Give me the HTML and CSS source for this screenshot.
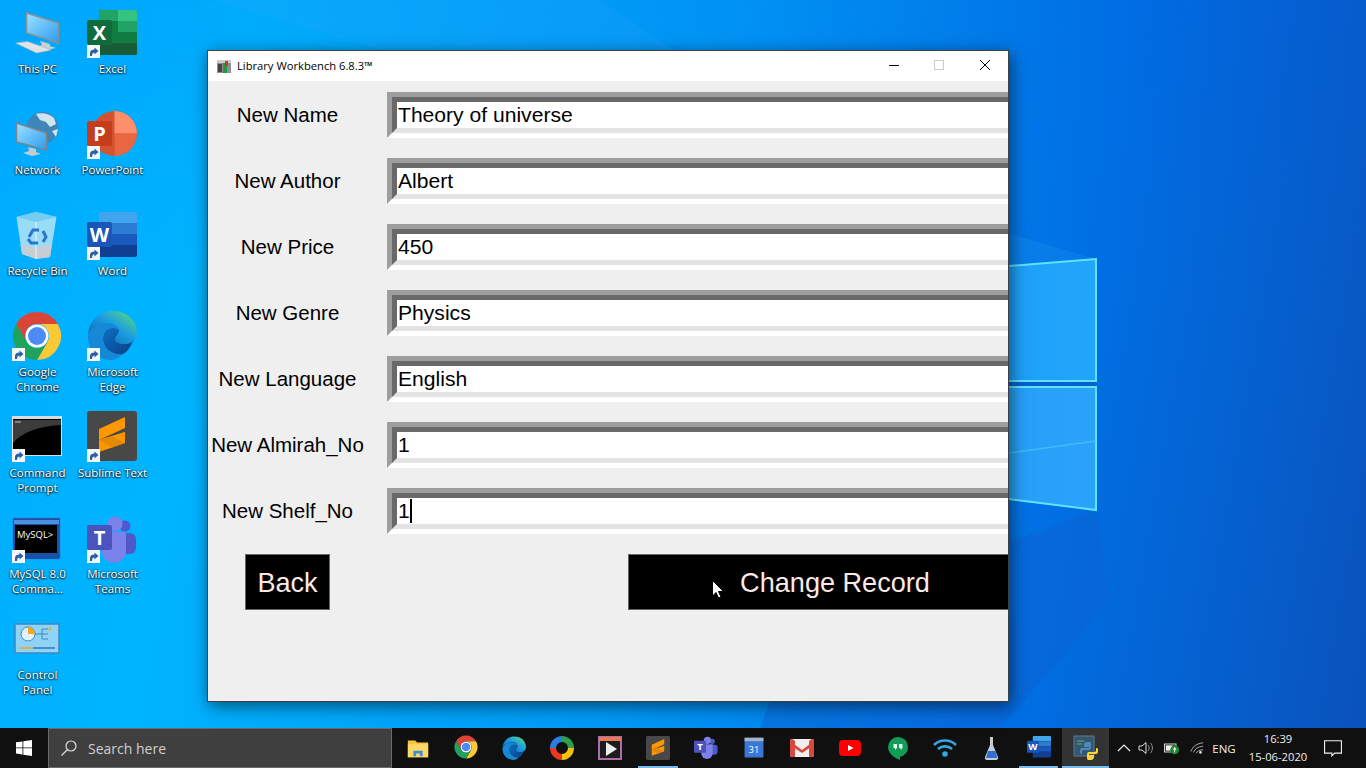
FILE: index.html
```html
<!DOCTYPE html>
<html lang="en">
<head>
<meta charset="utf-8">
<title>Library Workbench</title>
<link rel="stylesheet" href="styles.css">
</head>
<body>
<svg class="defs" aria-hidden="true">
  <defs>
    <linearGradient id="screen" x1="0" y1="0" x2="1" y2="1"><stop offset="0" stop-color="#9be2ff"/><stop offset="1" stop-color="#2f9cf0"/></linearGradient>
    <linearGradient id="edgeA" x1="0" y1="1" x2="1" y2="0"><stop offset="0" stop-color="#0c59a4"/><stop offset=".55" stop-color="#1b9de2"/><stop offset="1" stop-color="#62e06c"/></linearGradient>
    <linearGradient id="edgeB" x1="0" y1="0" x2="1" y2="1"><stop offset="0" stop-color="#0d6fc4"/><stop offset="1" stop-color="#0a3f86"/></linearGradient>
    <linearGradient id="pane" x1="0" y1="0" x2="1" y2="0"><stop offset="0" stop-color="#0f8cf0"/><stop offset="1" stop-color="#22a6fb"/></linearGradient>
    <linearGradient id="pane2" x1="0" y1="0" x2="1" y2="0"><stop offset="0" stop-color="#1590f0"/><stop offset="1" stop-color="#2aa4fa"/></linearGradient>
    <symbol id="badge" viewBox="0 0 13 13"><rect width="13" height="13" fill="#f4f6f8"/><path d="M3 11V8C3 5.500 5 4.500 7.500 4.500V2.500L11.500 6L7.500 9.500V7.500C6 7.500 5 8.500 5 11Z" fill="#2a5ea8"/></symbol>
    <symbol id="excel" viewBox="0 0 50 50"><rect x="12" width="38" height="45" rx="2" fill="#107c41"/><path d="M12 2a2 2 0 0 1 2-2H31V11H12Z" fill="#21a366"/><path d="M31 0H48a2 2 0 0 1 2 2V11H31Z" fill="#33c481"/><rect x="31" y="11" width="19" height="11" fill="#21a366"/><path d="M12 33H50V43a2 2 0 0 1-2 2H14a2 2 0 0 1-2-2Z" fill="#185c37"/><rect y="10" width="25" height="25" rx="2" fill="#0f6c3a"/><text x="12.500" y="29.500" class="tile-letter">X</text></symbol>
    <symbol id="word" viewBox="0 0 50 50"><path d="M12 2a2 2 0 0 1 2-2H48a2 2 0 0 1 2 2V11H12Z" fill="#41a5ee"/><rect x="12" y="11" width="38" height="11" fill="#2b7cd3"/><rect x="12" y="22" width="38" height="11" fill="#185abd"/><path d="M12 33H50V43a2 2 0 0 1-2 2H14a2 2 0 0 1-2-2Z" fill="#103f91"/><rect y="10" width="25" height="25" rx="2" fill="#1a56b8"/><text x="12.500" y="29.500" class="tile-letter">W</text></symbol>
    <symbol id="ppt" viewBox="0 0 50 50"><circle cx="27.500" cy="22.500" r="22.500" fill="#d35230"/><path d="M27.500 0A22.500 22.500 0 0 1 50 22.500H27.500Z" fill="#ff8f6b"/><path d="M27.500 22.500H50A22.500 22.500 0 0 1 27.500 45Z" fill="#ed6c47" opacity=".8"/><rect y="10" width="25" height="25" rx="2" fill="#c43e1c"/><text x="12.500" y="29.500" class="tile-letter">P</text></symbol>
    <symbol id="chrome" viewBox="-1 1 50 50"><path d="M3.200 12L13.600 30A12 12 0 0 1 24 12H44.800A24 24 0 0 0 3.200 12Z" fill="#db4437"/><path d="M44.800 12A24 24 0 0 1 24 48L34.400 30A12 12 0 0 0 24 12Z" fill="#fcc934"/><path d="M24 48A24 24 0 0 1 3.200 12L13.600 30A12 12 0 0 0 34.400 30Z" fill="#1fa35c"/><circle cx="24" cy="24" r="11.500" fill="#fff"/><circle cx="24" cy="24" r="9" fill="#4c8bf5"/></symbol>
    <symbol id="edge" viewBox="0 0 50 50"><path d="M1 27C1 12 11 1 26 1C40 1 50 11 50 23C50 31 44 34 38 34C32 34 28 32 28 29C28 26 32 26 32 21C32 15 27 12 21 13C10 14 1 20 1 27Z" fill="url(#edgeA)"/><path d="M1 27C1 20 10 13 21 13C27 13 31 16 32 20C24 15 16 20 16 29C16 38 26 46 36 44C32 48 28 50 24 50C11 50 1 40 1 27Z" fill="#1688d6"/><path d="M16 29C16 20 24 15 32 20C32 25 28 26 28 29C28 32 32 34 38 34C41 34 44 33 46 31C43 38 40 42 36 44C26 46 16 38 16 29Z" fill="url(#edgeB)"/></symbol>
    <symbol id="sublime" viewBox="0 0 50 50"><rect width="50" height="50" rx="3" fill="#484848"/><path d="M12 29L38 21V24L12 31Z" fill="#c97600"/><path d="M12 18L38 6V17L12 29Z" fill="#ff9800"/><path d="M12 29L38 21V32L12 41Z" fill="#fb9600"/><path d="M12 29L25 25L38 32L25 36.500Z" fill="#e58a00"/></symbol>
    <symbol id="teams" viewBox="0 0 50 50"><circle cx="38" cy="11" r="5.500" fill="#5059c9"/><rect x="32" y="18" width="17" height="21" rx="6" fill="#5059c9"/><circle cx="28" cy="9" r="7.500" fill="#7b83eb"/><path d="M15 17H39V36A12 12 0 0 1 15 36Z" fill="#7b83eb"/><rect y="10" width="25" height="25" rx="2" fill="#4b53bc"/><text x="12.500" y="29.500" class="tile-letter">T</text></symbol>
    <symbol id="gmail" viewBox="0 0 24 20"><rect y="1" width="24" height="18" rx="2" fill="#f1efee"/><path d="M0 3L12 12L24 3V7L12 15L0 7Z" fill="#e0443a"/><path d="M0 3C0 1 2 .5 3 1.500L5 3V19H2a2 2 0 0 1-2-2ZM24 3C24 1 22 .5 21 1.500L19 3V19H22a2 2 0 0 0 2-2Z" fill="#d8483e"/></symbol>
  </defs>
</svg>

<div class="desktop">
  <svg class="wallpaper" viewBox="0 0 1366 728" aria-hidden="true">
    <path d="M210 0L1096 259L1000 272L600 0Z" fill="#2aa8ff" opacity=".18"/>
    <path d="M1096 510L800 620L760 728H1000L1110 600Z" fill="#0b62d4" opacity=".5"/>
    <rect x="700" y="381" width="396" height="6" fill="#0a5fd0"/>
    <path d="M700 291L1096 259V381H700Z" fill="url(#pane)" stroke="#5fe4ff" stroke-width="2"/>
    <path d="M700 387H1096V510L700 460Z" fill="url(#pane2)" stroke="#5fe4ff" stroke-width="2"/>
    <path d="M700 495L1096 441" stroke="#4cc6ff" stroke-width="1.500" opacity=".7"/>
  </svg>

  <div class="icon-grid">
    <div class="desk-icon">
      <svg class="desk-art" viewBox="0 0 50 50"><path d="M14.500 3L46.500 13V33L14.500 23Z" fill="url(#screen)" stroke="#8b8f95" stroke-width="1.500"/><path d="M28 31L38 34V36L44 38L34 40L24 37L30 35Z" fill="#c9ced3"/><path d="M3.500 33L15.500 31.500L39.500 40L24.500 43Z" fill="#dfe3e6" stroke="#aab0b5" stroke-width=".5"/></svg>
      <span class="desk-label">This PC</span>
    </div>
    <div class="desk-icon">
      <span class="desk-art"><svg class="fill"><use href="#excel"/></svg><svg class="badge"><use href="#badge"/></svg></span>
      <span class="desk-label">Excel</span>
    </div>
    <div class="desk-icon">
      <svg class="desk-art" viewBox="0 0 50 50"><circle cx="30.500" cy="17" r="16" fill="#3f86b8"/><path d="M24 3C30 1 38 3 42 7L44 13L38 16L34 11L28 9ZM40 20L46 18L44 26Z" fill="#cfe4ee"/><path d="M4.500 12L34.500 22V39L4.500 31Z" fill="url(#screen)" stroke="#7c848c" stroke-width="1.500"/><path d="M16 36L24 38V41L29 43L20 45L11 42L17 40Z" fill="#c4c9ce"/></svg>
      <span class="desk-label">Network</span>
    </div>
    <div class="desk-icon">
      <span class="desk-art"><svg class="fill"><use href="#ppt"/></svg><svg class="badge"><use href="#badge"/></svg></span>
      <span class="desk-label">PowerPoint</span>
    </div>
    <div class="desk-icon">
      <svg class="desk-art" viewBox="0 0 50 50"><path d="M4.500 5L24 0L44.500 5L38 45L24 47L10 42Z" fill="#a9e2f7" opacity=".9"/><path d="M4.500 5L24 10L44.500 5L24 0Z" fill="#74cdf0"/><path d="M8.500 32L24 36L40 32L38 45L24 47L10 42Z" fill="#c7cdd2"/><path d="M24 10V47" stroke="#e6f7ff" stroke-width="1"/><g fill="none" stroke="#2f74c9" stroke-width="3"><path d="M17 25L21 18H27"/><path d="M31 19L34 25L31 30"/><path d="M26 31H19L16 27"/></g></svg>
      <span class="desk-label">Recycle Bin</span>
    </div>
    <div class="desk-icon">
      <span class="desk-art"><svg class="fill"><use href="#word"/></svg><svg class="badge"><use href="#badge"/></svg></span>
      <span class="desk-label">Word</span>
    </div>
    <div class="desk-icon">
      <span class="desk-art"><svg class="fill"><use href="#chrome"/></svg><svg class="badge"><use href="#badge"/></svg></span>
      <span class="desk-label">Google<br>Chrome</span>
    </div>
    <div class="desk-icon">
      <span class="desk-art lifted"><svg class="fill"><use href="#edge"/></svg><svg class="badge"><use href="#badge"/></svg></span>
      <span class="desk-label">Microsoft<br>Edge</span>
    </div>
    <div class="desk-icon">
      <span class="desk-art"><svg class="fill" viewBox="0 0 50 50"><rect y="2" width="50" height="40" fill="#d6dce0"/><rect x="1" y="5" width="48" height="36" fill="#000"/><path d="M1 29C10 18 28 12 49 11V6H1Z" fill="#3c3c3c"/><path d="M3 8H9" stroke="#bbb"/></svg><svg class="badge"><use href="#badge"/></svg></span>
      <span class="desk-label">Command<br>Prompt</span>
    </div>
    <div class="desk-icon">
      <span class="desk-art lifted"><svg class="fill"><use href="#sublime"/></svg><svg class="badge"><use href="#badge"/></svg></span>
      <span class="desk-label">Sublime Text</span>
    </div>
    <div class="desk-icon">
      <span class="desk-art"><svg class="fill" viewBox="0 0 50 50"><rect x="1" y="3" width="47" height="41" rx="1" fill="#1c4fa8" stroke="#3a6fc4" stroke-width=".5"/><rect x="2" y="5" width="45" height="4" fill="#4c8ee0"/><rect x="3" y="10" width="42" height="28" fill="#000"/><text x="5" y="23" class="mysql">MySQL&gt;</text></svg><svg class="badge"><use href="#badge"/></svg></span>
      <span class="desk-label">MySQL 8.0<br>Comma...</span>
    </div>
    <div class="desk-icon">
      <span class="desk-art"><svg class="fill"><use href="#teams"/></svg><svg class="badge"><use href="#badge"/></svg></span>
      <span class="desk-label">Microsoft<br>Teams</span>
    </div>
    <div class="desk-icon">
      <svg class="desk-art" viewBox="0 0 50 50"><rect x="3" y="8" width="44" height="29" fill="#8fd3f6" stroke="#3f87c0" stroke-width="1.500"/><circle cx="16" cy="18" r="7" fill="#dff3ff" stroke="#3f87c0"/><path d="M16 18V11A7 7 0 0 1 23 18Z" fill="#f4a623"/><path d="M23 18H30V13H36M30 18H36M30 18V23H36" stroke="#3f87c0" fill="none"/><path d="M7 32H21" stroke="#f4a623" stroke-width="1.500"/><path d="M21 32H43" stroke="#2f78c8" stroke-width="1.500"/><circle cx="38" cy="13" r="1.500" fill="#f4a623"/></svg>
      <span class="desk-label">Control<br>Panel</span>
    </div>
  </div>

  <section class="window">
    <header class="titlebar">
      <svg class="app-icon" viewBox="0 0 16 16"><rect x="1" y="3" width="14" height="12" fill="#8a9096"/><rect x="1" y="2" width="14" height="3" fill="#c8ccd0"/><rect x="7" y="5" width="4" height="10" fill="#1f9a3c"/><rect x="9" y="3" width="3" height="5" fill="#d0342c"/><rect x="2" y="6" width="4" height="8" fill="#444"/></svg>
      <span class="title-text">Library Workbench 6.8.3™</span>
      <div class="win-controls">
        <svg class="win-btn" viewBox="0 0 46 30"><path d="M19 14.500H29" stroke="#000"/></svg>
        <svg class="win-btn" viewBox="0 0 46 30"><rect x="18.500" y="9.500" width="9" height="9" fill="none" stroke="#ccc"/></svg>
        <svg class="win-btn" viewBox="0 0 46 30"><path d="M18 9L28 19M28 9L18 19" stroke="#000"/></svg>
      </div>
    </header>
    <div class="form">
      <div class="row"><label class="field-label">New Name</label><div class="entry"><div class="entry-inner">Theory of universe</div></div></div>
      <div class="row"><label class="field-label">New Author</label><div class="entry"><div class="entry-inner">Albert</div></div></div>
      <div class="row"><label class="field-label">New Price</label><div class="entry"><div class="entry-inner">450</div></div></div>
      <div class="row"><label class="field-label">New Genre</label><div class="entry"><div class="entry-inner">Physics</div></div></div>
      <div class="row"><label class="field-label">New Language</label><div class="entry"><div class="entry-inner">English</div></div></div>
      <div class="row"><label class="field-label">New Almirah_No</label><div class="entry"><div class="entry-inner">1</div></div></div>
      <div class="row"><label class="field-label">New Shelf_No</label><div class="entry"><div class="entry-inner">1<span class="caret"></span></div></div></div>
      <div class="actions">
        <button class="btn btn-back">Back</button>
        <button class="btn btn-change">Change Record</button>
      </div>
    </div>
    <svg class="pointer" viewBox="0 0 12 19"><path d="M.5.500V16L4 12.500L6.500 18L9 17L6.500 11.500H11.500Z" fill="#fff" stroke="#000"/></svg>
  </section>
</div>

<footer class="taskbar">
  <div class="start"><svg class="start-logo" viewBox="0 0 16 16"><path d="M0 2.300L6.500 1.400V7.500H0ZM7.300 1.300L16 0V7.500H7.300ZM0 8.300H6.500V14.500L0 13.600ZM7.300 8.300H16V16L7.300 14.700Z" fill="#fff"/></svg></div>
  <div class="search">
    <svg class="search-glass" viewBox="0 0 16 16"><circle cx="10" cy="6" r="5" fill="none" stroke="#ddd" stroke-width="1.200"/><path d="M6.500 9.500L.5 15.500" stroke="#ddd" stroke-width="1.200"/></svg>
    <span class="search-text">Search here</span>
  </div>
  <div class="apps">
    <div class="app"><svg class="app-art" viewBox="-1 -1 26 26"><path d="M1 4H9L11 6H23V22H1Z" fill="#f4c542"/><rect x="1" y="8" width="22" height="14" fill="#ffd968"/><path d="M7 21V15H17V21H14V18H10V21Z" fill="#3a8ed8"/></svg></div>
    <div class="app"><svg class="app-art"><use href="#chrome"/></svg></div>
    <div class="app"><svg class="app-art"><use href="#edge"/></svg></div>
    <div class="app"><svg class="app-art" viewBox="0 0 24 24"><g fill="none" stroke-width="6"><path d="M12 3A9 9 0 0 1 21 12" stroke="#2e9e4f"/><path d="M21 12A9 9 0 0 1 12 21" stroke="#f4c20d"/><path d="M12 21A9 9 0 0 1 3 12" stroke="#e8391f"/><path d="M3 12A9 9 0 0 1 12 3" stroke="#2a7de1"/></g><circle cx="12" cy="12" r="4" fill="#111"/></svg></div>
    <div class="app"><svg class="app-art" viewBox="0 0 24 24"><rect x="1" y="1" width="22" height="22" fill="#1c1c1c" stroke="#b06ca8" stroke-width="2"/><path d="M1 1H23V5H1Z" fill="#e87a52"/><path d="M8 6L19 13L8 20Z" fill="#eee"/></svg></div>
    <div class="app underlined"><svg class="app-art"><use href="#sublime"/></svg></div>
    <div class="app"><svg class="app-art"><use href="#teams"/></svg></div>
    <div class="app"><svg class="app-art" viewBox="-2 0 28 26"><rect x="1" y="1" width="22" height="23" rx="1" fill="#3a78d8"/><rect x="1" y="1" width="22" height="4" fill="#a8b4c4"/><text x="12" y="19" class="cal">31</text></svg></div>
    <div class="app"><svg class="app-art" viewBox="0 0 24 20"><use href="#gmail"/></svg></div>
    <div class="app"><svg class="app-art" viewBox="0 0 24 24"><rect x="1" y="4" width="22" height="16" rx="4" fill="#f00"/><path d="M10 9L15.500 12L10 15Z" fill="#fff"/></svg></div>
    <div class="app"><svg class="app-art" viewBox="0 0 24 24"><path d="M12 1A10 10 0 0 1 14 20.800V24C8 22 2 17 2 11A10 10 0 0 1 12 1Z" fill="#0f9d58"/><path d="M7.500 8H11V12L9 14V12H7.500ZM13 8H16.500V12L14.500 14V12H13Z" fill="#e6f4ea"/></svg></div>
    <div class="app"><svg class="app-art" viewBox="0 0 24 24"><g fill="none" stroke="#35a7e0" stroke-width="2.600"><path d="M1 9C7 3 17 3 23 9"/><path d="M5 13C9 9.500 15 9.500 19 13"/></g><circle cx="12" cy="18" r="2.800" fill="#35a7e0"/></svg></div>
    <div class="app"><svg class="app-art" viewBox="0 0 24 24"><path d="M10 1H13V9L18 21C18.500 23 17.500 24 16 24H7C5.500 24 4.500 23 5 21L10 9Z" fill="#c7ccd3"/><path d="M8 15H15.500L17.500 22H6Z" fill="#2f6fd0"/></svg></div>
    <div class="app underlined"><svg class="app-art"><use href="#word"/></svg></div>
    <div class="app active"><svg class="app-art" viewBox="0 0 24 24"><rect x="0" y="0" width="20" height="20" fill="#36566e" stroke="#5b7b92"/><path d="M3 5H10M3 8H8" stroke="#5fae6a"/><path d="M14 6C10 6 10 8 10 10V11H15V12H8C6 12 6 14 6 16C6 18 7 18 8 18V16C8 14 9 14 11 14H15C17 14 17 12 17 10V8C17 6 16 6 14 6Z" fill="#4b8bbe"/><path d="M16 24C20 24 20 22 20 20V19H15V18H22C24 18 24 16 24 14C24 12 23 12 22 12V14C22 16 21 16 19 16H15C13 16 13 18 13 20V22C13 24 14 24 16 24Z" fill="#ffd43b"/></svg></div>
  </div>
  <div class="tray">
    <div class="tray-item w-chev"><svg class="tray-art" viewBox="0 0 16 16"><path d="M2 11L8 5L14 11" fill="none" stroke="#eee" stroke-width="1.200"/></svg></div>
    <div class="tray-item w-vol"><svg class="tray-art" viewBox="0 0 16 16"><path d="M1 6H4L8 2.500V13.500L4 10H1Z" fill="none" stroke="#ddd"/><path d="M10 5C11.500 7 11.500 9 10 11M12.500 3C15 6 15 10 12.500 13" fill="none" stroke="#999"/></svg></div>
    <div class="tray-item w-bat"><svg class="tray-art" viewBox="0 0 18 16"><rect x=".5" y="3.500" width="13" height="9" fill="#111" stroke="#eee"/><rect x="2" y="5" width="8" height="6" fill="#eee"/><circle cx="12" cy="10" r="5" fill="#1b8a2e"/><path d="M12 6.500L14 10H10Z" fill="#fff"/><rect x="11.500" y="10" width="1" height="3" fill="#fff"/></svg></div>
    <div class="tray-item w-wifi"><svg class="tray-art" viewBox="0 0 16 16"><g fill="none" stroke="#bbb"><path d="M1 12C3 6 8 3 15 2"/><path d="M4 13C5.500 9 9 6.500 15 6"/><path d="M7 14C8 12 11 10 15 10"/></g><circle cx="12" cy="13" r="1.500" fill="#ddd"/></svg></div>
    <div class="tray-item w-lang">ENG</div>
    <div class="tray-item w-clock"><span>16:39</span><span>15-06-2020</span></div>
    <div class="tray-item w-note"><svg class="note-art" viewBox="0 0 16 16"><path d="M.5 1.500H15.500V12.500H9.500L7 15V12.500H.5Z" fill="none" stroke="#eee"/></svg></div>
  </div>
</footer>
</body>
</html>
```

FILE: styles.css
```css
* { box-sizing: border-box; }
html, body { margin: 0; height: 100%; }
body {
  width: 1366px;
  height: 768px;
  overflow: hidden;
  display: flex;
  flex-direction: column;
  font-family: "Open Sans", "Liberation Sans", sans-serif;
}
symbol { overflow: visible; }
.defs { position: absolute; width: 0; height: 0; }

/* desktop */
.desktop {
  position: relative;
  flex: 1;
  background:
    linear-gradient(180deg, rgba(0, 70, 220, .08), rgba(0, 70, 220, 0) 40%),
    linear-gradient(100deg, #00aeff 0%, #00b4ff 17%, #0098f6 50%, #0070e4 76%, #0a52bc 100%);
}
.wallpaper { position: absolute; inset: 0; width: 100%; height: 100%; }
.icon-grid {
  position: relative;
  display: grid;
  grid-template-columns: 75px 75px;
  grid-auto-rows: 101px;
  padding-top: 10px;
  width: 150px;
}
.desk-icon { display: flex; flex-direction: column; align-items: center; }
.desk-art { position: relative; display: block; width: 50px; height: 50px; flex: none; overflow: visible; margin-right: 1px; }
.lifted { top: -3px; }
.fill { display: block; width: 50px; height: 50px; overflow: visible; }
.badge { position: absolute; left: 0; top: 35px; width: 13px; height: 13px; }
.lifted .badge { top: 38px; }
.desk-label {
  margin-top: 1px;
  color: #fff;
  font-size: 11.500px;
  line-height: 15px;
  text-align: center;
  white-space: nowrap;
  text-shadow: 0 1px 2px #000, 0 0 2px rgba(0, 0, 0, .8);
}
.tile-letter { font: 700 20px "Open Sans", sans-serif; fill: #fff; text-anchor: middle; }
.mysql { font: 9.500px "Open Sans", sans-serif; fill: #fff; }
.cal { font: 11px "Open Sans", sans-serif; fill: #fff; text-anchor: middle; }

/* application window */
.window {
  position: absolute;
  left: 207px;
  top: 50px;
  width: 802px;
  height: 652px;
  border: 1px solid #3a4148;
  background: #efefef;
  box-shadow: 2px 4px 16px rgba(0, 0, 0, .55);
}
.titlebar {
  display: flex;
  align-items: center;
  height: 30px;
  background: #fff;
  padding-left: 8px;
}
.app-icon { width: 16px; height: 16px; flex: none; margin-top: -1px; }
.title-text { margin-left: 5px; margin-top: -2px; font-size: 11.200px; color: #000; white-space: nowrap; }
.win-controls { display: flex; margin-left: auto; }
.win-btn { display: block; width: 46px; height: 30px; }

.form {
  display: flex;
  flex-direction: column;
  gap: 20px;
  padding-top: 11px;
  overflow: hidden;
  height: 620px;
}
.row { display: flex; align-items: stretch; height: 46px; flex: none; }
.field-label {
  flex: none;
  width: 159px;
  align-self: center;
  text-align: center;
  white-space: nowrap;
  font: 20.500px "Liberation Sans", Arial, sans-serif;
  color: #000;
}
.entry {
  flex: none;
  margin-left: 20px;
  width: 700px;
  border-style: solid;
  border-width: 5px;
  border-color: #9e9e9e #fff #fff #9e9e9e;
}
.entry-inner {
  height: 36px;
  border-style: solid;
  border-width: 5px;
  border-color: #696969 #e3e3e3 #e3e3e3 #696969;
  background: #fff;
  padding-left: 1px;
  font: 21.100px/26px "Liberation Sans", Arial, sans-serif;
  color: #000;
  white-space: nowrap;
}
.caret { display: inline-block; width: 2px; height: 24px; background: #000; vertical-align: -5px; }

.actions { display: flex; flex: none; height: 56px; padding-left: 37px; }
.btn {
  flex: none;
  height: 56px;
  padding: 2px 0 0;
  background: #000;
  border: 1px solid #666;
  color: #fbe9e4;
  font: 27.100px "Liberation Sans", Arial, sans-serif;
}
.btn-back { width: 85px; }
.btn-change { width: 414px; margin-left: 298px; }
.pointer { position: absolute; left: 504px; top: 529px; width: 12px; height: 19px; }

/* taskbar */
.taskbar { display: flex; flex: none; height: 40px; background: #101010; color: #eee; }
.start { flex: none; width: 48px; display: flex; align-items: center; justify-content: center; }
.start-logo { width: 16px; height: 16px; }
.search {
  flex: none;
  width: 344px;
  display: flex;
  align-items: center;
  padding-left: 12px;
  background: #3f3f3f;
  border: 1px solid #6a6a6a;
}
.search-glass { width: 16px; height: 16px; flex: none; }
.search-text { margin-left: 11px; font-size: 14px; color: #cfcfcf; }
.apps { display: flex; flex: none; padding-left: 2px; }
.app { position: relative; flex: none; width: 48px; display: flex; align-items: center; justify-content: center; }
.app:nth-child(n+11) { width: 47px; }
.app-art { display: block; width: 24px; height: 24px; overflow: visible; }
.underlined::after {
  content: "";
  position: absolute;
  left: 4px;
  right: 4px;
  bottom: 0;
  height: 2px;
  background: #76b9ed;
}
.active { background: #333; }
.active::after {
  content: "";
  position: absolute;
  left: 0;
  right: 0;
  bottom: 0;
  height: 2px;
  background: #76b9ed;
}
.tray { display: flex; flex: none; }
.tray-item { flex: none; display: flex; align-items: center; justify-content: center; }
.tray-art { width: 16px; height: 16px; display: block; }
.w-chev { width: 29px; }
.w-vol { width: 16px; }
.w-bat { width: 36px; }
.w-wifi { width: 14px; }
.w-lang { width: 40px; font-size: 11.500px; }
.w-clock { width: 68px; flex-direction: column; font-size: 11.200px; line-height: 18px; }
.w-note { width: 42px; }
.note-art { width: 18px; height: 18px; }
```
